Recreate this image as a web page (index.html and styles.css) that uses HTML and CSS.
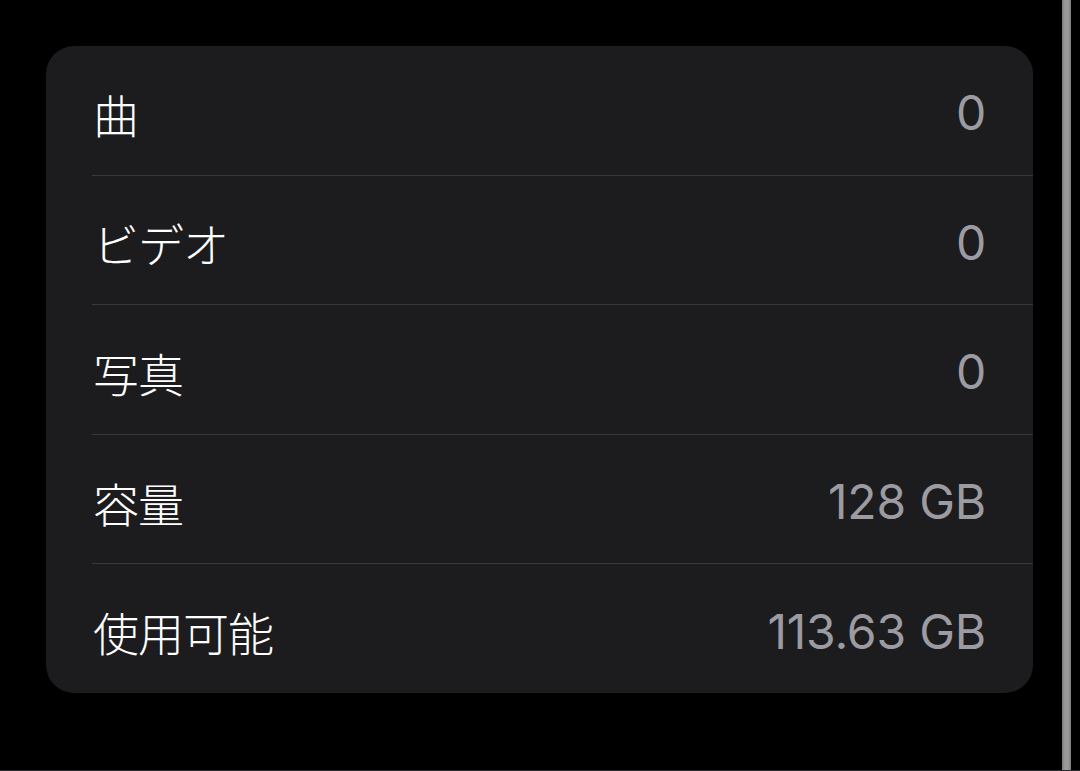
FILE: index.html
```html
<!DOCTYPE html>
<html lang="ja">
<head>
<meta charset="utf-8">
<link rel="stylesheet" href="styles.css">
</head>
<body>
<div class="screen">
  <div class="content">
    <div class="card">
      <div class="row"><span class="label">曲</span><span class="value">0</span></div>
      <div class="row"><span class="label">ビデオ</span><span class="value">0</span></div>
      <div class="row"><span class="label">写真</span><span class="value">0</span></div>
      <div class="row"><span class="label">容量</span><span class="value">128 GB</span></div>
      <div class="row"><span class="label">使用可能</span><span class="value">113.63 GB</span></div>
    </div>
  </div>
  <div class="edge"></div>
  <div class="gutter"></div>
</div>
</body>
</html>
```
FILE: styles.css
```css
* { box-sizing: border-box; }
html, body { margin: 0; padding: 0; background: #000; }
body {
  width: 1080px;
  height: 771px;
  overflow: hidden;
  font-family: Inter, "Noto Sans CJK JP", sans-serif;
}
.screen {
  display: flex;
  height: 771px;
  border-bottom: 1px solid #2c2c2e;
}
.content {
  flex: 1;
  padding: 46px 29px 0 46px;
}
.card {
  background: #1c1c1e;
  border-radius: 28px;
  display: flex;
  flex-direction: column;
  height: 647px;
}
.row {
  flex: 1;
  margin-left: 46px;
  padding: 5px 47px 0 1px;
  display: flex;
  align-items: center;
  justify-content: space-between;
  border-bottom: 1px solid #38383a;
}
.row:last-child { border-bottom: none; }
.label {
  color: #ffffff;
  font-family: "Noto Sans CJK JP", sans-serif;
  font-weight: 300;
  font-size: 46px;
  letter-spacing: -1px;
}
.value {
  color: #9b9ba1;
  font-family: Inter, sans-serif;
  font-size: 48px;
  letter-spacing: -0.2px;
}
.edge {
  width: 9px;
  background: linear-gradient(to right, #7a7a7a, #9a9a9a 30%, #9a9a9a 70%, #7a7a7a);
}
.gutter { width: 9px; }
```
